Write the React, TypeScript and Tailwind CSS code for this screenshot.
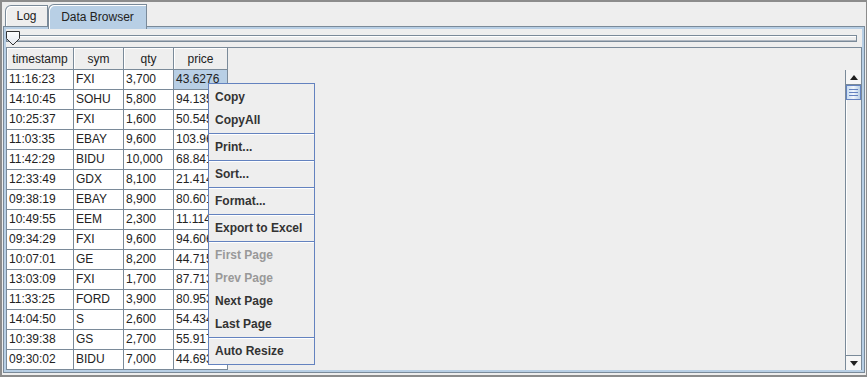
const rows: string[][] = [
	["11:16:23", "FXI", "3,700", "43.6276"],
	["14:10:45", "SOHU", "5,800", "94.1352"],
	["10:25:37", "FXI", "1,600", "50.5459"],
	["11:03:35", "EBAY", "9,600", "103.9612"],
	["11:42:29", "BIDU", "10,000", "68.8417"],
	["12:33:49", "GDX", "8,100", "21.4145"],
	["09:38:19", "EBAY", "8,900", "80.6017"],
	["10:49:55", "EEM", "2,300", "11.1148"],
	["09:34:29", "FXI", "9,600", "94.6063"],
	["10:07:01", "GE", "8,200", "44.7159"],
	["13:03:09", "FXI", "1,700", "87.7132"],
	["11:33:25", "FORD", "3,900", "80.9531"],
	["14:04:50", "S", "2,600", "54.4346"],
	["10:39:38", "GS", "2,700", "55.9173"],
	["09:30:02", "BIDU", "7,000", "44.6931"],
];

const colWidths = ["w-[67px]", "w-[50px]", "w-[50px]", "w-[54px]"];
const headers = ["timestamp", "sym", "qty", "price"];

type MenuEntry = { label: string; disabled?: boolean } | "sep";

const menu: MenuEntry[] = [
	{ label: "Copy" },
	{ label: "CopyAll" },
	"sep",
	{ label: "Print..." },
	"sep",
	{ label: "Sort..." },
	"sep",
	{ label: "Format..." },
	"sep",
	{ label: "Export to Excel" },
	"sep",
	{ label: "First Page", disabled: true },
	{ label: "Prev Page", disabled: true },
	{ label: "Next Page" },
	{ label: "Last Page" },
	"sep",
	{ label: "Auto Resize" },
];

const Tabs = () => (
	<div className="flex items-end h-[25px] pl-[3px]">
		<div className="h-[21px] w-[43px] border border-b-0 border-[#7a8a99] rounded-tl-[6px] bg-[#eeeeee] flex items-center justify-center text-[#222] shadow-[inset_1px_1px_0_#ffffff]">
			Log
		</div>
		<div className="relative z-10 -mb-[3px] h-[25px] w-[99px] border border-b-0 border-[#7a8a99] rounded-tl-[6px] bg-[#b8cfe5] flex items-start pt-[3px] justify-center text-[#222] shadow-[inset_1px_1px_0_#ffffff]">
			Data Browser
		</div>
	</div>
);

const Slider = () => (
	<div className="relative h-[15px] mt-[2px]">
		<div className="mt-[4px] mr-[5px] h-[7px] border border-[#7a8a99] bg-[#eeeeee] shadow-[inset_0_1px_0_#ffffff,inset_0_-1px_0_#b0b8c2]" />
		<svg
			className="absolute left-0 top-0"
			width="15"
			height="15"
			viewBox="0 0 15 15"
		>
			<defs>
				<linearGradient id="thumb" x1="0" y1="0" x2="0" y2="1">
					<stop offset="0" stopColor="#ffffff" />
					<stop offset="1" stopColor="#e4e8ee" />
				</linearGradient>
			</defs>
			<path
				d="M0.5 0.5 H13.5 V7.5 L7 14 L0.5 7.5 Z"
				fill="url(#thumb)"
				stroke="#333333"
			/>
		</svg>
	</div>
);

const ScrollBar = () => (
	<div className="w-[16px] flex flex-col border-l border-[#7a8a99] bg-[#eeeeee]">
		<div className="h-[15px] bg-[#f6f6f6] border-b border-[#7a8a99] flex items-center justify-center">
			<svg width="8" height="5" viewBox="0 0 8 5">
				<path d="M4 0 L8 5 H0 Z" fill="#222" />
			</svg>
		</div>
		<div className="h-[15px] border border-[#6382bf] bg-gradient-to-r from-[#c8dcf0] via-[#f0f6fc] to-[#b8cfe5] flex flex-col items-center justify-center gap-[2px]">
			<div className="w-[9px] h-[1px] bg-[#6382bf]" />
			<div className="w-[9px] h-[1px] bg-[#6382bf]" />
			<div className="w-[9px] h-[1px] bg-[#6382bf]" />
		</div>
		<div className="flex-1 shadow-[inset_1px_0_0_#ffffff]" />
		<div className="h-[15px] bg-[#f6f6f6] border-t border-[#7a8a99] flex items-center justify-center">
			<svg width="8" height="5" viewBox="0 0 8 5">
				<path d="M0 0 H8 L4 5 Z" fill="#222" />
			</svg>
		</div>
	</div>
);

const DataTable = () => (
	<div className="mt-[1px] flex-1 flex flex-col border-t border-l border-r border-[#7a8a99] overflow-hidden">
		<div className="flex h-[22px] shrink-0">
			{headers.map((h, i) => (
				<div
					key={h}
					className={`${colWidths[i]} h-[22px] border-r border-b border-[#7a8a99] bg-[#eeeeee] flex items-center justify-center text-[#222] shadow-[inset_1px_1px_0_#ffffff]`}
				>
					{h}
				</div>
			))}
		</div>
		<div className="flex flex-1 overflow-hidden">
			<div className="flex-1 flex flex-col">
				{rows.map((r, ri) => (
					<div key={ri} className="flex h-[20px] shrink-0">
						{r.map((c, ci) => (
							<div
								key={ci}
								className={`${colWidths[ci]} h-[20px] border-r border-b border-[#7a8a99] pl-[2px] leading-[19px] whitespace-nowrap overflow-hidden text-[#222] ${
									ri === 0 && ci === 3 ? "bg-[#b8cfe5]" : "bg-white"
								}`}
							>
								{c}
							</div>
						))}
					</div>
				))}
			</div>
			<ScrollBar />
		</div>
	</div>
);

const PopupMenu = () => (
	<div className="absolute left-[206px] top-[81px] w-[107px] border border-[#6382bf] bg-[#eeeeee] pt-[2px] pb-[1px] z-20">
		{menu.map((m, i) =>
			m === "sep" ? (
				<div key={i} className="h-[4px] pt-[1px]">
					<div className="h-[1px] bg-[#6382bf]" />
					<div className="h-[1px] bg-white" />
				</div>
			) : (
				<div
					key={i}
					className={`h-[23px] leading-[23px] pl-[6px] font-bold whitespace-nowrap ${
						m.disabled ? "text-[#999999]" : "text-[#333333]"
					}`}
				>
					{m.label}
				</div>
			)
		)}
	</div>
);

export default function App() {
	return (
		<div className="relative w-[867px] h-[377px] overflow-hidden bg-[#eeeeee] border-t-2 border-l-2 border-b-2 border-r border-[#8c8c8c] flex flex-col font-['Liberation_Sans',Arial,sans-serif] text-[12px]">
			<Tabs />
			<div className="flex-1 ml-[1px] mr-[1px] mb-[2px] border border-[#7a8a99] flex">
				<div className="flex-1 border-2 border-[#b8cfe5] flex flex-col">
					<Slider />
					<DataTable />
				</div>
			</div>
			<PopupMenu />
		</div>
	);
}
